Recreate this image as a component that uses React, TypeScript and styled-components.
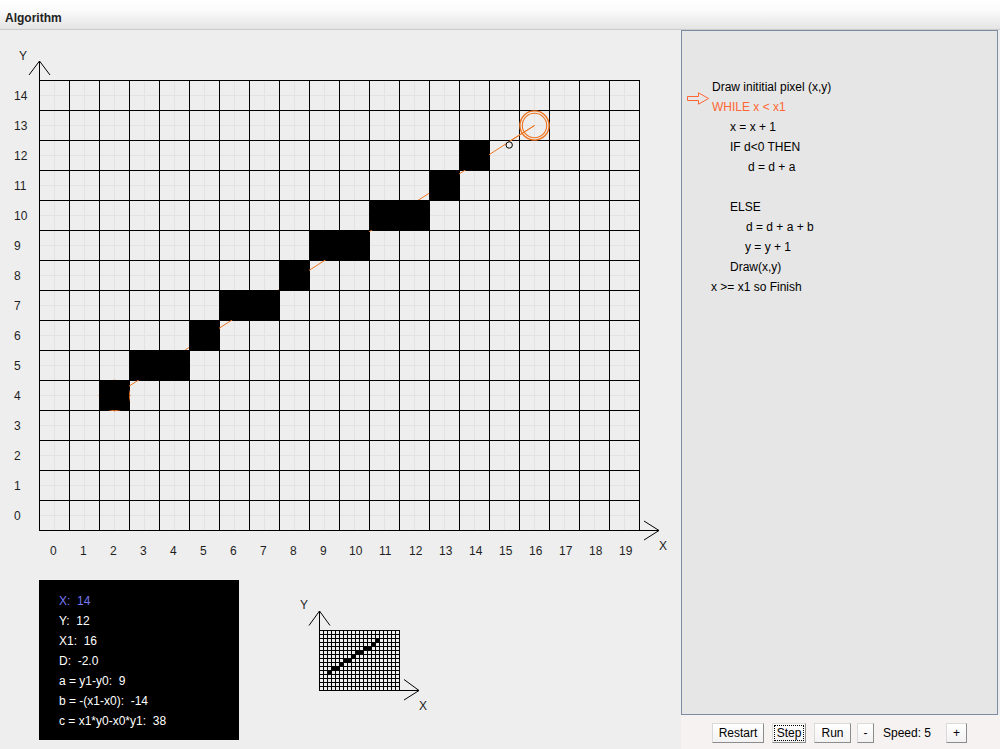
import React from "react";
import styled, { createGlobalStyle } from "styled-components";

const ORANGE = "#ec7420";
const HILITE = "#ff6633";

const PIXELS: [number, number][] = [
  [2, 4], [3, 5], [4, 5], [5, 6], [6, 7], [7, 7], [8, 8],
  [9, 9], [10, 9], [11, 10], [12, 10], [13, 11], [14, 12],
];

const COLS = 20;
const ROWS = 15;
const CELL = 30;
const GX = 39;
const GY = 80;
const GB = GY + ROWS * CELL; // 530
const GR = GX + COLS * CELL; // 639

const MCELL = 4;
const MX = 319;
const MY = 630;
const MB = MY + ROWS * MCELL; // 690
const MR = MX + COLS * MCELL; // 399

const CODE: { text: string; indent: number; active?: boolean }[] = [
  { text: "Draw inititial pixel (x,y)", indent: 30 },
  { text: "WHILE x < x1", indent: 30, active: true },
  { text: "x = x + 1", indent: 48 },
  { text: "IF d<0 THEN", indent: 48 },
  { text: "d = d + a", indent: 66 },
  { text: "", indent: 0 },
  { text: "ELSE", indent: 48 },
  { text: "d = d + a + b", indent: 64 },
  { text: "y = y + 1", indent: 63 },
  { text: "Draw(x,y)", indent: 48 },
  { text: "x >= x1 so Finish", indent: 29 },
];

const INFO: { text: string; accent?: boolean }[] = [
  { text: "X:  14", accent: true },
  { text: "Y:  12" },
  { text: "X1:  16" },
  { text: "D:  -2.0" },
  { text: "a = y1-y0:  9" },
  { text: "b = -(x1-x0):  -14" },
  { text: "c = x1*y0-x0*y1:  38" },
];

const GlobalStyle = createGlobalStyle`
  html, body {
    margin: 0;
    padding: 0;
    background: #eeeeee;
  }
  body {
    font-family: "Liberation Sans", Arial, sans-serif;
    font-size: 12px;
    color: #000;
  }
`;

const Window = styled.div`
  width: 1000px;
  height: 749px;
  display: flex;
  flex-direction: column;
  overflow: hidden;
  background: #eeeeee;
`;

const TitleBar = styled.div`
  box-sizing: border-box;
  height: 30px;
  padding: 7px 0 0 5px;
  line-height: 22px;
  font-size: 12px;
  font-weight: bold;
  color: #222;
  background: linear-gradient(#ffffff 0%, #fbfbfb 35%, #e4e4e4 100%);
  border-bottom: 1px solid #cbcbcb;
`;

const Body = styled.div`
  display: flex;
  flex: 1;
`;

const LeftPane = styled.div`
  width: 681px;
  display: flex;
  flex-direction: column;
`;

const ChartSvg = styled.svg`
  display: block;
  flex: none;
`;

const AxisText = styled.text`
  font-family: "Liberation Sans", Arial, sans-serif;
  font-size: 12px;
  fill: #1e1e1e;
`;

const BottomRow = styled.div`
  display: flex;
  align-items: flex-start;
  padding-left: 39px;
  flex: 1;
`;

const InfoBox = styled.div`
  box-sizing: border-box;
  width: 200px;
  height: 160px;
  background: #000;
  padding: 11px 0 0 20px;
  display: flex;
  flex-direction: column;
`;

const InfoLine = styled.div<{ $accent?: boolean }>`
  height: 20px;
  line-height: 20px;
  white-space: pre;
  color: ${(p) => (p.$accent ? "#7777f2" : "#ffffff")};
`;

const MiniSvg = styled.svg`
  display: block;
  margin: 15px 0 0 51px;
  flex: none;
`;

const RightPane = styled.div`
  width: 319px;
  display: flex;
  flex-direction: column;
`;

const CodePanel = styled.div`
  box-sizing: border-box;
  width: 317px;
  height: 685px;
  border: 1px solid #7e8ca2;
  background: #e6e6e6;
  padding-top: 46px;
  display: flex;
  flex-direction: column;
`;

const CodeLine = styled.div<{ $indent: number; $active?: boolean }>`
  position: relative;
  height: 20px;
  line-height: 20px;
  padding-left: ${(p) => p.$indent}px;
  white-space: pre;
  color: ${(p) => (p.$active ? HILITE : "#000")};
`;

const Pointer = styled.svg`
  position: absolute;
  left: 5px;
  top: -5px;
`;

const ButtonBar = styled.div`
  flex: 1;
  display: flex;
  align-items: flex-start;
  padding: 8px 0 0 31px;
  background: #f6f2f2;
`;

const Button = styled.button<{ $w: number; $ml: number }>`
  box-sizing: border-box;
  width: ${(p) => p.$w}px;
  height: 20px;
  margin-left: ${(p) => p.$ml}px;
  padding: 0;
  font-family: "Liberation Sans", Arial, sans-serif;
  font-size: 12px;
  color: #000;
  background: linear-gradient(#ffffff, #f2f2f2);
  border: 1px solid;
  border-color: #dadada #8c8c8c #8c8c8c #dadada;
  display: flex;
  align-items: center;
  justify-content: center;
`;

const FocusRing = styled.span`
  box-sizing: border-box;
  flex: 1;
  align-self: stretch;
  margin: 1px;
  border: 1px dotted #000;
  display: flex;
  align-items: center;
  justify-content: center;
`;

const SpeedLabel = styled.span<{ $ml: number }>`
  margin-left: ${(p) => p.$ml}px;
  height: 20px;
  line-height: 20px;
`;

function MainChart() {
  const sub: JSX.Element[] = [];
  for (let i = 0; i < COLS; i++) {
    const x = GX + i * CELL + 15.5;
    sub.push(<line key={"sv" + i} x1={x} y1={GY} x2={x} y2={GB} />);
  }
  for (let j = 0; j < ROWS; j++) {
    const y = GY + j * CELL + 15.5;
    sub.push(<line key={"sh" + j} x1={GX} y1={y} x2={GR} y2={y} />);
  }
  const main: JSX.Element[] = [];
  for (let i = 0; i <= COLS; i++) {
    const x = GX + i * CELL + 0.5;
    main.push(<line key={"mv" + i} x1={x} y1={GY} x2={x} y2={GB + 1} />);
  }
  for (let j = 0; j <= ROWS; j++) {
    const y = GY + j * CELL + 0.5;
    main.push(<line key={"mh" + j} x1={GX} y1={y} x2={GR + 1} y2={y} />);
  }
  return (
    <ChartSvg width={681} height={550} viewBox="0 30 681 550">
      <g stroke="#e3e3e3" strokeWidth={1} shapeRendering="crispEdges">{sub}</g>
      <g stroke="#000" strokeWidth={1} shapeRendering="crispEdges">{main}</g>

      {/* axes arrows */}
      <g stroke="#000" strokeWidth={1} fill="none">
        <line x1={39.5} y1={80} x2={39.5} y2={61} />
        <polyline points="29,75 39.5,61 50,75" />
        <line x1={639} y1={530.5} x2={659} y2={530.5} />
        <polyline points="644,521 659,530.5 644,540" />
      </g>
      <AxisText x={19} y={60}>Y</AxisText>
      <AxisText x={659} y={550}>X</AxisText>

      {Array.from({ length: ROWS }, (_, r) => (
        <AxisText key={"rl" + r} x={14} y={520 - r * CELL}>
          {r}
        </AxisText>
      ))}
      {Array.from({ length: COLS }, (_, c) => (
        <AxisText key={"cl" + c} x={GX + c * CELL + (c >= 10 ? 10 : 11)} y={555}>
          {c}
        </AxisText>
      ))}

      {/* ideal line and start marker */}
      <line x1={114.5} y1={395.5} x2={534.5} y2={125.5} stroke={ORANGE} strokeWidth={1} />
      <circle cx={114.5} cy={395.5} r={15.3} fill="none" stroke={ORANGE} strokeWidth={1} />

      {/* plotted pixels */}
      <g fill="#000">
        {PIXELS.map(([c, r]) => (
          <rect key={`p${c}-${r}`} x={GX + c * CELL} y={GB - (r + 1) * CELL} width={CELL} height={CELL} />
        ))}
      </g>

      {/* end marker */}
      <circle cx={534.5} cy={125.5} r={14.6} fill="none" stroke={ORANGE} strokeWidth={1.4} />
      <circle cx={534.5} cy={125.5} r={12.2} fill="none" stroke={ORANGE} strokeWidth={1.1} />
      <line x1={509} y1={141.5} x2={534.5} y2={125.5} stroke={ORANGE} strokeWidth={1} />
      <circle cx={509.2} cy={145} r={3.2} fill="#eeeeee" stroke="#000" strokeWidth={1} />
    </ChartSvg>
  );
}

function MiniChart() {
  const lines: JSX.Element[] = [];
  for (let i = 0; i <= COLS; i++) {
    const x = MX + i * MCELL + 0.5;
    lines.push(<line key={"v" + i} x1={x} y1={MY} x2={x} y2={MB + 1} />);
  }
  for (let j = 0; j <= ROWS; j++) {
    const y = MY + j * MCELL + 0.5;
    lines.push(<line key={"h" + j} x1={MX} y1={y} x2={MR + 1} y2={y} />);
  }
  return (
    <MiniSvg width={150} height={125} viewBox="290 595 150 125">
      <g stroke="#000" strokeWidth={1} shapeRendering="crispEdges">{lines}</g>
      <g fill="#000">
        {PIXELS.map(([c, r]) => (
          <rect key={`m${c}-${r}`} x={MX + c * MCELL} y={MB - (r + 1) * MCELL} width={MCELL + 1} height={MCELL + 1} />
        ))}
      </g>
      <g stroke="#000" strokeWidth={1} fill="none">
        <line x1={319.5} y1={630} x2={319.5} y2={611} />
        <polyline points="309,625.5 319.5,611 330,625.5" />
        <line x1={399} y1={690.5} x2={419} y2={690.5} />
        <polyline points="404,679.5 419,690.5 404,700" />
      </g>
      <AxisText x={300} y={609}>Y</AxisText>
      <AxisText x={419} y={710}>X</AxisText>
    </MiniSvg>
  );
}

export default function App() {
  return (
    <>
      <GlobalStyle />
      <Window>
        <TitleBar>Algorithm</TitleBar>
        <Body>
          <LeftPane>
            <MainChart />
            <BottomRow>
              <InfoBox>
                {INFO.map((l, i) => (
                  <InfoLine key={i} $accent={l.accent}>
                    {l.text}
                  </InfoLine>
                ))}
              </InfoBox>
              <MiniChart />
            </BottomRow>
          </LeftPane>
          <RightPane>
            <CodePanel>
              {CODE.map((l, i) => (
                <CodeLine key={i} $indent={l.indent} $active={l.active}>
                  {l.active && (
                    <Pointer width={23} height={15} viewBox="0 0 23 15">
                      <path
                        d="M0.5 4.5 H11.5 V0.8 L21.5 6.5 L11.5 12.2 V8.5 H0.5 Z"
                        fill="none"
                        stroke={HILITE}
                        strokeWidth={1}
                      />
                    </Pointer>
                  )}
                  {l.text || " "}
                </CodeLine>
              ))}
            </CodePanel>
            <ButtonBar>
              <Button $w={52} $ml={0}>Restart</Button>
              <Button $w={34} $ml={8}>
                <FocusRing>Step</FocusRing>
              </Button>
              <Button $w={37} $ml={8}>Run</Button>
              <Button $w={17} $ml={6}>-</Button>
              <SpeedLabel $ml={9}>Speed: 5</SpeedLabel>
              <Button $w={21} $ml={15}>+</Button>
            </ButtonBar>
          </RightPane>
        </Body>
      </Window>
    </>
  );
}
